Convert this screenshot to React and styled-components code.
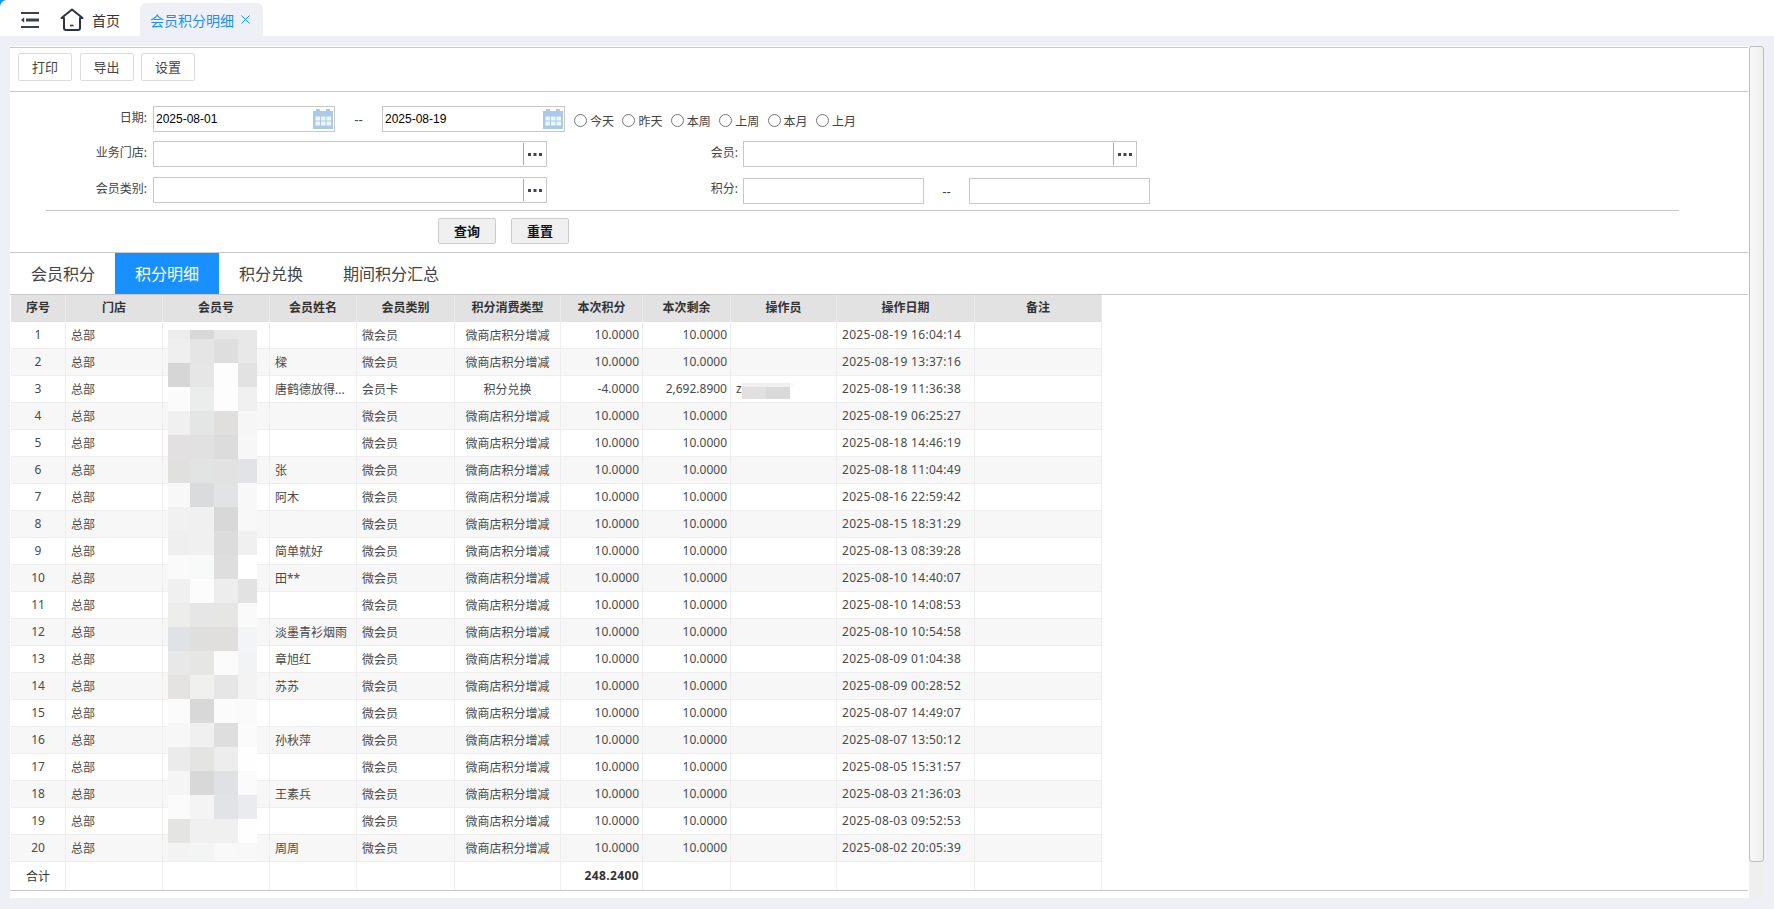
import React from 'react';
import styled, { createGlobalStyle } from 'styled-components';

const GlobalStyle = createGlobalStyle`
  html, body {
    margin: 0;
    padding: 0;
    background: #eef0f5;
    overflow: hidden;
  }
  body {
    font-family: "Noto Sans", "Noto Sans CJK SC", sans-serif;
    color: #444;
  }
`;

const columnWidths = [55, 97, 107, 87, 98, 106, 82, 88, 106, 138, 127];
const headers = ['序号', '门店', '会员号', '会员姓名', '会员类别', '积分消费类型', '本次积分', '本次剩余', '操作员', '操作日期', '备注'];

const names = { 2: '樑', 3: '唐鹤德放得...', 6: '张', 7: '阿木', 9: '简单就好', 10: '田**', 12: '淡墨青衫烟雨', 13: '章旭红', 14: '苏苏', 16: '孙秋萍', 18: '王素兵', 20: '周周' };

const dates = [
  '2025-08-19 16:04:14', '2025-08-19 13:37:16', '2025-08-19 11:36:38', '2025-08-19 06:25:27',
  '2025-08-18 14:46:19', '2025-08-18 11:04:49', '2025-08-16 22:59:42', '2025-08-15 18:31:29',
  '2025-08-13 08:39:28', '2025-08-10 14:40:07', '2025-08-10 14:08:53', '2025-08-10 10:54:58',
  '2025-08-09 01:04:38', '2025-08-09 00:28:52', '2025-08-07 14:49:07', '2025-08-07 13:50:12',
  '2025-08-05 15:31:57', '2025-08-03 21:36:03', '2025-08-03 09:52:53', '2025-08-02 20:05:39',
];

const memberBlur = [
  '#ededed #d8d8d8 #e6e8e8 #e8e8e8', '#efefef #e5e5e5 #dedede #e8e8e8', '#d6d6d6 #e6e6e6 #fdfdfd #e2e2e2',
  '#fbfbfb #ebeded #fdfdfd #f0f0f0', '#f0f0f0 #e4e6e6 #e0dfde #f6f6f6', '#e2e0e1 #e1e1e1 #dcdcdc #f7f7f7',
  '#e0e0de #e2e4e3 #e2e2e2 #e1e3e6', '#f8f8f8 #d9dbdd #e1e3e6 #f8f8f8', '#f1f1f1 #f0f0f0 #d8d8d8 #f8f8f8',
  '#efefef #f0f0f0 #dcdcdc #f0f0f0', '#fafafa #f8faf9 #dedede #ffffff', '#f0f0f0 #fcfcfc #ededed #e2e2e2',
  '#ededec #e6e6e6 #e6e6e5 #fafafa', '#e0e3e6 #dfdfdd #e0dfde #f2f4f7', '#e8e8e8 #e6e6e4 #fbfbfb #f2f3f5',
  '#e4e3e1 #f0f0ee #e6e6e6 #f3f3f3', '#fbfbfb #d8d8d8 #fbfbfb #fafafa', '#f7f7f7 #f0f0f0 #dedede #fbfbfb',
  '#ebebeb #e4e4e2 #ededed #fefefe', '#f5f5f5 #d8d8d8 #dfe1e4 #fbfbfb', '#fbfbfb #f4f4f4 #e1e3e7 #e9ebee',
  '#e4e4e2 #f0f0f0 #f0f0f0 #fefefe', '#f3f3f3 #f3f4f4 #f9f9f9 #f8f8f8',
].flatMap((row) => row.split(' '));

const operatorBlur = ['#efefef', '#efefef', '#f9f9f9', '#e0e0e0', '#d9d9d9', '#ffffff'];

const rows = dates.map((date, i) => {
  const no = i + 1;
  const exchange = no === 3;
  return {
    no,
    name: names[no] || '',
    type: exchange ? '会员卡' : '微会员',
    kind: exchange ? '积分兑换' : '微商店积分增减',
    points: exchange ? '-4.0000' : '10.0000',
    left: exchange ? '2,692.8900' : '10.0000',
    operator: exchange ? 'z' : '',
    date,
  };
});

const Page = styled.div`
  width: 1774px;
  height: 909px;
`;

const TopShell = styled.div`
  background: #1890ff;
`;

const TopBar = styled.div`
  display: flex;
  align-items: center;
  height: 36px;
  box-sizing: border-box;
  padding: 4px 0 0 21px;
  background: #fff;
  border-top-left-radius: 7px;
`;

const MenuIcon = styled.svg`
  width: 18px;
  height: 16px;
  margin-right: 21px;
`;

const HomeIcon = styled.svg`
  width: 24px;
  height: 24px;
  margin-right: 8px;
`;

const HomeText = styled.span`
  font-size: 14px;
  color: #333;
`;

const PageTab = styled.div`
  display: flex;
  align-items: center;
  align-self: flex-end;
  gap: 7px;
  height: 33px;
  margin-left: 20px;
  padding: 0 14px 0 10px;
  box-sizing: border-box;
  width: 123px;
  background: #eef0f5;
  border-radius: 6px 6px 0 0;
  font-size: 14px;
  color: #1890ff;
  white-space: nowrap;
`;

const CloseIcon = styled.svg`
  width: 9px;
  height: 9px;
  flex: none;
`;

const Panel = styled.div`
  display: flex;
  gap: 1px;
  width: 1754px;
  height: 852px;
  margin: 10px 0 0 10px;
  background: #fff;
`;

const Content = styled.div`
  width: 1738px;
  padding-top: 1px;
`;

const Scrollbar = styled.div`
  width: 15px;
  background: #efefef;
`;

const ScrollThumb = styled.div`
  height: 816px;
  box-sizing: border-box;
  border: 1px solid #bdbdbd;
  border-radius: 3px;
  background: linear-gradient(to right, #f8f8f8, #efefef);
`;

const Toolbar = styled.div`
  display: flex;
  gap: 7.5px;
  height: 45px;
  box-sizing: border-box;
  padding: 5px 0 0 8px;
  border-top: 1px solid #c8c8c8;
  border-bottom: 1px solid #c8c8c8;
`;

const ToolButton = styled.button`
  width: 54px;
  height: 28px;
  padding: 0 0 2px;
  background: #fff;
  border: 1px solid #dcdcdc;
  border-radius: 2px;
  font-family: inherit;
  font-size: 13px;
  color: #444;
`;

const FormGrid = styled.div`
  display: grid;
  grid-template-columns: 143px 394px 196px 1fr;
  grid-template-rows: 35px 36px 26px;
  align-items: start;
  padding-top: 14px;
`;

const FieldLabel = styled.label`
  height: 26px;
  line-height: 24px;
  padding-right: ${(p) => p.$gap}px;
  text-align: right;
  font-size: 12px;
  color: #444;
`;

const DateRow = styled.div`
  grid-column: 2 / 5;
  display: flex;
  align-items: center;
  height: 26px;
`;

const DateBox = styled.div`
  position: relative;
  width: ${(p) => p.$width}px;
  height: 26px;
`;

const TextInput = styled.input`
  display: block;
  width: ${(p) => (p.$width ? `${p.$width}px` : '100%')};
  height: 26px;
  box-sizing: border-box;
  padding: 0 2px;
  border: 1px solid #c8c8c8;
  border-radius: 0;
  outline: none;
  background: #fff;
  font-family: "Liberation Sans", Arial, sans-serif;
  font-size: 12px;
  color: #000;
`;

const CalendarIcon = styled.svg`
  position: absolute;
  right: 2px;
  top: 3px;
  width: 20px;
  height: 20px;
`;

const RangeDash = styled.span`
  width: ${(p) => p.$width}px;
  text-align: center;
  font-family: "Liberation Sans", Arial, sans-serif;
  font-size: 13px;
  color: #444;
`;

const RadioGroup = styled.div`
  display: flex;
  align-items: center;
  margin: 3px 0 0 9px;
`;

const RadioItem = styled.label`
  display: flex;
  align-items: center;
  gap: 3px;
  width: 48.4px;
  font-size: 12px;
  color: #444;
  white-space: nowrap;
`;

const RadioDot = styled.input`
  width: 13px;
  height: 13px;
  margin: 0;
  flex: none;
`;

const PickerField = styled.div`
  display: flex;
  height: 26px;
  width: ${(p) => p.$width}px;
  box-sizing: border-box;
  border: 1px solid #c8c8c8;
  background: #fff;
`;

const PickerInput = styled.input`
  flex: 1;
  min-width: 0;
  padding: 0 2px;
  border: none;
  outline: none;
  background: transparent;
`;

const PickerButton = styled.button`
  display: flex;
  align-items: center;
  justify-content: center;
  width: 23px;
  margin: 1px 0;
  padding: 0;
  background: #fff;
  border: none;
  border-left: 1px solid #aaa;
`;

const DotsIcon = styled.svg`
  width: 14px;
  height: 3px;
`;

const RangeRow = styled.div`
  display: flex;
  align-items: center;
  height: 26px;
  margin-top: 1px;
`;

const FormDivider = styled.div`
  width: 1633px;
  height: 1px;
  margin: 7px 0 0 36px;
  background: #c8c8c8;
`;

const ActionRow = styled.div`
  display: flex;
  gap: 15px;
  height: 34px;
  padding: 7px 0 0 428px;
  border-bottom: 1px solid #c8c8c8;
`;

const ActionButton = styled.button`
  width: 58px;
  height: 26px;
  padding: 0 0 2px;
  background: #f0f0f0;
  border: 1px solid #ccc;
  border-radius: 2px;
  font-family: inherit;
  font-size: 13px;
  font-weight: 700;
  color: #111;
`;

const TabBar = styled.div`
  display: flex;
  height: 41px;
  padding-left: 1px;
  border-bottom: 1px solid #c8c8c8;
`;

const TabItem = styled.div`
  display: flex;
  align-items: center;
  padding: 0 20px 2px;
  font-size: 16px;
  color: ${(p) => (p.$active ? '#fff' : '#444')};
  background: ${(p) => (p.$active ? '#1890ff' : 'transparent')};
`;

const TableWrap = styled.div`
  position: relative;
  height: 595px;
  padding-left: 1px;
  border-bottom: 1px solid #c8c8c8;
`;

const DataTable = styled.table`
  width: 1091px;
  table-layout: fixed;
  border-collapse: separate;
  border-spacing: 0;
  font-size: 12px;
  color: #4a4a4a;
`;

const HeadCell = styled.th`
  height: 27px;
  padding: 0 0 3px;
  box-sizing: border-box;
  background: #e2e2e2;
  border-right: 1px solid #ececec;
  font-weight: 700;
  color: #333;
  text-align: center;
`;

const BodyRow = styled.tr`
  background: ${(p) => (p.$striped ? '#f7f7f7' : '#fff')};
`;

const Cell = styled.td`
  height: 27px;
  box-sizing: border-box;
  padding: 0 ${(p) => (p.$align === 'right' ? '3px' : '5px')} 1px 5px;
  border-right: 1px solid #eee;
  border-bottom: 1px solid #eee;
  text-align: ${(p) => p.$align || 'left'};
  letter-spacing: ${(p) => (p.$wide ? '0.3px' : 'normal')};
  white-space: nowrap;
  overflow: hidden;
`;

const TotalCell = styled(Cell)`
  height: 28px;
  border-bottom: none;
  color: #333;
`;

const TotalSum = styled(TotalCell)`
  font-weight: 700;
  letter-spacing: 0.4px;
`;

const Mosaic = styled.div`
  position: absolute;
  left: ${(p) => p.$left}px;
  top: ${(p) => p.$top}px;
  display: grid;
  grid-template-columns: ${(p) => p.$columns};
  grid-template-rows: ${(p) => p.$rows};
`;

const MosaicTile = styled.div`
  background: ${(p) => p.$color};
`;

const CalendarGlyph = () => (
  <CalendarIcon viewBox="0 0 20 20">
    <path d="M0 2h3V0h4v2h6V0h4v2h3v18H0z" fill="#a9cbe8" />
    <path d="M2.5 7.5h4.5v4H2.5zM8 7.5h4.5v4H8zM13.5 7.5H18v4h-4.5zM2.5 12.5h4.5v4H2.5zM8 12.5h4.5v4H8zM13.5 12.5H18v4h-4.5z" fill="#eef5fb" />
  </CalendarIcon>
);

const DateField = ({ width, value }) => (
  <DateBox $width={width}>
    <TextInput value={value} readOnly />
    <CalendarGlyph />
  </DateBox>
);

const Picker = ({ width }) => (
  <PickerField $width={width}>
    <PickerInput readOnly />
    <PickerButton>
      <DotsIcon viewBox="0 0 14 3">
        <path d="M0 0h3v3H0zM5.5 0h3v3h-3zM11 0h3v3h-3z" fill="#44444c" />
      </DotsIcon>
    </PickerButton>
  </PickerField>
);

export default function App() {
  return (
    <Page>
      <GlobalStyle />
      <TopShell>
        <TopBar>
          <MenuIcon viewBox="0 0 18 16">
            <path d="M0 0h18v2H0zM5 6.5h13v3H5zM0 14h18v2H0zM3.2 5.2v5.6L0 8z" fill="#3b424c" />
          </MenuIcon>
          <HomeIcon viewBox="0 0 24 24">
            <path d="M12 1.5 22.5 10H20v10a2 2 0 0 1-2 2H6a2 2 0 0 1-2-2V10H1.5z" fill="none" stroke="#2b3440" strokeWidth="2" strokeLinejoin="round" />
            <path d="M10 17.5h3.5" stroke="#2b3440" strokeWidth="1.6" />
          </HomeIcon>
          <HomeText>首页</HomeText>
          <PageTab>
            会员积分明细
            <CloseIcon viewBox="0 0 9 9">
              <path d="M.5.5l8 8M8.5.5l-8 8" stroke="#1890ff" strokeWidth="1" />
            </CloseIcon>
          </PageTab>
        </TopBar>
      </TopShell>

      <Panel>
        <Content>
          <Toolbar>
            <ToolButton>打印</ToolButton>
            <ToolButton>导出</ToolButton>
            <ToolButton>设置</ToolButton>
          </Toolbar>

          <FormGrid>
            <FieldLabel $gap={6}>日期:</FieldLabel>
            <DateRow>
              <DateField width={182} value="2025-08-01" />
              <RangeDash $width={47}>--</RangeDash>
              <DateField width={183} value="2025-08-19" />
              <RadioGroup>
                {['今天', '昨天', '本周', '上周', '本月', '上月'].map((text) => (
                  <RadioItem key={text}>
                    <RadioDot type="radio" name="range" />
                    {text}
                  </RadioItem>
                ))}
              </RadioGroup>
            </DateRow>

            <FieldLabel $gap={6}>业务门店:</FieldLabel>
            <Picker width={394} />
            <FieldLabel $gap={5}>会员:</FieldLabel>
            <Picker width={394} />

            <FieldLabel $gap={6}>会员类别:</FieldLabel>
            <Picker width={394} />
            <FieldLabel $gap={5}>积分:</FieldLabel>
            <RangeRow>
              <TextInput $width={181} readOnly />
              <RangeDash $width={45}>--</RangeDash>
              <TextInput $width={181} readOnly />
            </RangeRow>
          </FormGrid>

          <FormDivider />
          <ActionRow>
            <ActionButton>查询</ActionButton>
            <ActionButton>重置</ActionButton>
          </ActionRow>

          <TabBar>
            <TabItem>会员积分</TabItem>
            <TabItem $active>积分明细</TabItem>
            <TabItem>积分兑换</TabItem>
            <TabItem>期间积分汇总</TabItem>
          </TabBar>

          <TableWrap>
            <DataTable>
              <colgroup>
                {columnWidths.map((w, i) => <col key={i} width={w} />)}
              </colgroup>
              <thead>
                <tr>
                  {headers.map((h) => <HeadCell key={h}>{h}</HeadCell>)}
                </tr>
              </thead>
              <tbody>
                {rows.map((row) => (
                  <BodyRow key={row.no} $striped={row.no % 2 === 0}>
                    <Cell $align="center">{row.no}</Cell>
                    <Cell>总部</Cell>
                    <Cell />
                    <Cell>{row.name}</Cell>
                    <Cell>{row.type}</Cell>
                    <Cell $align="center">{row.kind}</Cell>
                    <Cell $align="right">{row.points}</Cell>
                    <Cell $align="right">{row.left}</Cell>
                    <Cell>{row.operator}</Cell>
                    <Cell $wide>{row.date}</Cell>
                    <Cell />
                  </BodyRow>
                ))}
                <tr>
                  <TotalCell $align="center">合计</TotalCell>
                  <TotalCell />
                  <TotalCell />
                  <TotalCell />
                  <TotalCell />
                  <TotalCell />
                  <TotalSum $align="right">248.2400</TotalSum>
                  <TotalCell />
                  <TotalCell />
                  <TotalCell />
                  <TotalCell />
                </tr>
              </tbody>
            </DataTable>

            <Mosaic $left={158} $top={35} $columns="22px 24px 24px 19px" $rows="9px repeat(21, 24px) 18px">
              {memberBlur.map((color, i) => <MosaicTile key={i} $color={color} />)}
            </Mosaic>
            <Mosaic $left={732} $top={88} $columns="24px 24px 4px" $rows="4px 12px">
              {operatorBlur.map((color, i) => <MosaicTile key={i} $color={color} />)}
            </Mosaic>
          </TableWrap>
        </Content>
        <Scrollbar>
          <ScrollThumb />
        </Scrollbar>
      </Panel>
    </Page>
  );
}
